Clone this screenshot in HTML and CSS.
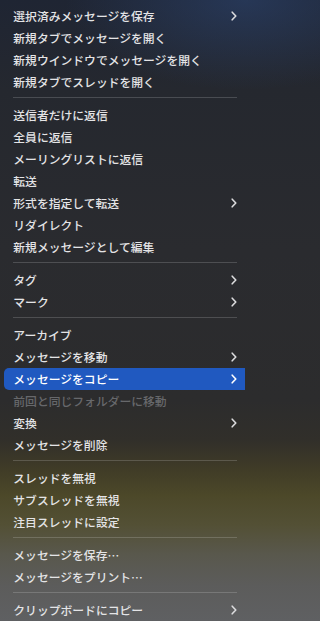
FILE: index.html
```html
<!DOCTYPE html>
<html lang="ja">
<head>
<meta charset="utf-8">
<link rel="stylesheet" href="styles.css">
</head>
<body>
<div class="menu">
  <div class="item sub"><span>選択済みメッセージを保存</span><svg class="chev" viewBox="0 0 6 10"><path d="M1.2 1.2 L4.8 5 L1.2 8.8"/></svg></div>
  <div class="item"><span>新規タブでメッセージを開く</span></div>
  <div class="item"><span>新規ウインドウでメッセージを開く</span></div>
  <div class="item"><span>新規タブでスレッドを開く</span></div>
  <div class="sep"></div>
  <div class="item"><span>送信者だけに返信</span></div>
  <div class="item"><span>全員に返信</span></div>
  <div class="item"><span>メーリングリストに返信</span></div>
  <div class="item"><span>転送</span></div>
  <div class="item sub"><span>形式を指定して転送</span><svg class="chev" viewBox="0 0 6 10"><path d="M1.2 1.2 L4.8 5 L1.2 8.8"/></svg></div>
  <div class="item"><span>リダイレクト</span></div>
  <div class="item"><span>新規メッセージとして編集</span></div>
  <div class="sep"></div>
  <div class="item sub"><span>タグ</span><svg class="chev" viewBox="0 0 6 10"><path d="M1.2 1.2 L4.8 5 L1.2 8.8"/></svg></div>
  <div class="item sub"><span>マーク</span><svg class="chev" viewBox="0 0 6 10"><path d="M1.2 1.2 L4.8 5 L1.2 8.8"/></svg></div>
  <div class="sep"></div>
  <div class="item"><span>アーカイブ</span></div>
  <div class="item sub"><span>メッセージを移動</span><svg class="chev" viewBox="0 0 6 10"><path d="M1.2 1.2 L4.8 5 L1.2 8.8"/></svg></div>
  <div class="item sub active"><span>メッセージをコピー</span><svg class="chev" viewBox="0 0 6 10"><path d="M1.2 1.2 L4.8 5 L1.2 8.8"/></svg></div>
  <div class="item disabled"><span>前回と同じフォルダーに移動</span></div>
  <div class="item sub"><span>変換</span><svg class="chev" viewBox="0 0 6 10"><path d="M1.2 1.2 L4.8 5 L1.2 8.8"/></svg></div>
  <div class="item"><span>メッセージを削除</span></div>
  <div class="sep"></div>
  <div class="item"><span>スレッドを無視</span></div>
  <div class="item"><span>サブスレッドを無視</span></div>
  <div class="item"><span>注目スレッドに設定</span></div>
  <div class="sep"></div>
  <div class="item"><span>メッセージを保存…</span></div>
  <div class="item"><span>メッセージをプリント…</span></div>
  <div class="sep"></div>
  <div class="item sub"><span>クリップボードにコピー</span><svg class="chev" viewBox="0 0 6 10"><path d="M1.2 1.2 L4.8 5 L1.2 8.8"/></svg></div>
</div>
</body>
</html>
```

FILE: styles.css
```css
html, body {
  margin: 0;
  padding: 0;
  height: 621px;
  overflow: hidden;
}
body {
  background:
    radial-gradient(ellipse 180px 90px at 245px 0px, rgba(45, 70, 115, 0.55), rgba(45, 70, 115, 0) 100%),
    linear-gradient(to bottom,
      #1f2533 0px,
      #25282f 90px,
      #2a2b2f 250px,
      #2c2c2d 400px,
      #312f2a 440px,
      #403c27 470px,
      #4c4829 495px,
      #535035 525px,
      #59584d 555px,
      #5c5c5b 585px,
      #5f6062 621px);
  font-family: "Noto Sans CJK JP", "Noto Sans", sans-serif;
  font-size: 11.8px;
  font-weight: 500;
  color: #e4e4e6;
}
.menu {
  width: 245px;
  display: flex;
  flex-direction: column;
  padding-top: 4.7px;
}
.item {
  height: 22px;
  display: flex;
  align-items: center;
  justify-content: space-between;
  padding: 0 8px 0 13.3px;
  white-space: nowrap;
  line-height: 1;
}
.item span {
  display: block;
}
.item.active {
  background: #2059c0;
  color: #ffffff;
  margin-left: 4px;
  padding-left: 9.3px;
  border-radius: 5px 0 0 5px;
}
.item.disabled {
  color: #67686b;
}
.chev {
  width: 6px;
  height: 10px;
  fill: none;
  stroke: #dcdcde;
  stroke-width: 1.6;
  stroke-linecap: round;
  stroke-linejoin: round;
}
.item.active .chev {
  stroke: #ffffff;
}
.sep {
  height: 11px;
  display: flex;
  align-items: flex-start;
  padding: 0 8px 0 13px;
}
.sep::before {
  content: "";
  display: block;
  margin-top: 4.5px;
  height: 1px;
  width: 100%;
  background: rgba(255, 255, 255, 0.17);
}
```
